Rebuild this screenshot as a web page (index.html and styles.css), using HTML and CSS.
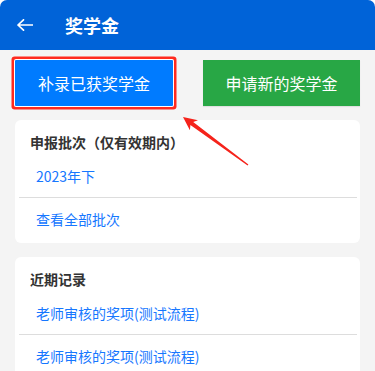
FILE: index.html
```html
<!DOCTYPE html>
<html>
<head>
    <title>奖学金</title>
    <meta charset="utf-8">
    <link rel="stylesheet" href="styles.css">
</head>
<body>

<div class="page">
    <div class="header">
        <svg class="back" width="16" height="12" viewBox="0 0 16 12">
            <path d="M1 6 H15.5 M6.5 0.8 L1 6 L6.5 11.2" fill="none" stroke="#fff" stroke-width="1.7" stroke-linecap="round" stroke-linejoin="round"/>
        </svg>
        <span class="title">奖学金</span>
    </div>

    <div class="actions">
        <button class="btn btn-blue highlight">补录已获奖学金</button>
        <button class="btn btn-green">申请新的奖学金</button>
    </div>

    <div class="card">
        <div class="card-title">申报批次（仅有效期内）</div>
        <div class="list">
            <div class="item">2023年下</div>
            <div class="item">查看全部批次</div>
        </div>
    </div>

    <div class="card">
        <div class="card-title">近期记录</div>
        <div class="list">
            <div class="item">老师审核的奖项(测试流程)</div>
            <div class="item">老师审核的奖项(测试流程)</div>
        </div>
    </div>

    <svg class="pointer" width="375" height="371" viewBox="0 0 375 371">
        <polygon points="183,117 198,120.3 193.2,122 248.4,164.4 247.6,165.6 190.4,125.1 189.9,130.3" fill="#f5231b"/>
    </svg>
</div>

</body>
</html>
```

FILE: styles.css
```css
html, body {
    margin: 0;
    padding: 0;
    background: #fff;
}

body {
    font-family: "Noto Sans CJK SC", "Noto Sans", sans-serif;
    width: 375px;
    height: 371px;
    overflow: hidden;
}

.page {
    position: relative;
    height: 371px;
    background: #f4f4f4;
    border-radius: 7px 7px 0 0;
    overflow: hidden;
}

.header {
    height: 50px;
    background: #0063d8;
    display: flex;
    align-items: center;
    padding-left: 17px;
}

.back {
    display: block;
    margin-top: -1px;
}

.title {
    margin-left: 32px;
    color: #fff;
    font-size: 18px;
    font-weight: bold;
    line-height: 20px;
}

.actions {
    display: flex;
    justify-content: space-between;
    padding: 10px 15px 0 15px;
}

.btn {
    height: 46px;
    border: none;
    color: #fff;
    font-family: inherit;
    font-size: 16px;
    padding: 0;
    margin: 0;
}

.btn-blue {
    width: 158px;
    background: #007bff;
}

.btn-green {
    width: 157px;
    background: #28a745;
    box-shadow: 0 1px 1px rgba(0, 0, 0, 0.08);
}

.highlight {
    box-shadow: 0 0 0 1px #fff, 0 0 0 3.5px #ff2a1f;
    border-radius: 1px;
}

.card {
    margin: 14px 15px 0 15px;
    background: #fff;
    border-radius: 6px;
    padding: 12px 0 3px 0;
}

.card-title {
    padding: 0 15px;
    font-size: 14px;
    font-weight: bold;
    line-height: 20px;
    color: #333;
    margin-bottom: 3px;
}

.list {
    margin: 0 3px 0 4px;
}

.item {
    height: 42px;
    line-height: 42px;
    padding-left: 17px;
    font-size: 14px;
    color: #1677ff;
}

.item + .item {
    border-top: 1px solid #ddd;
}

.pointer {
    position: absolute;
    left: 0;
    top: 0;
    pointer-events: none;
}
```
